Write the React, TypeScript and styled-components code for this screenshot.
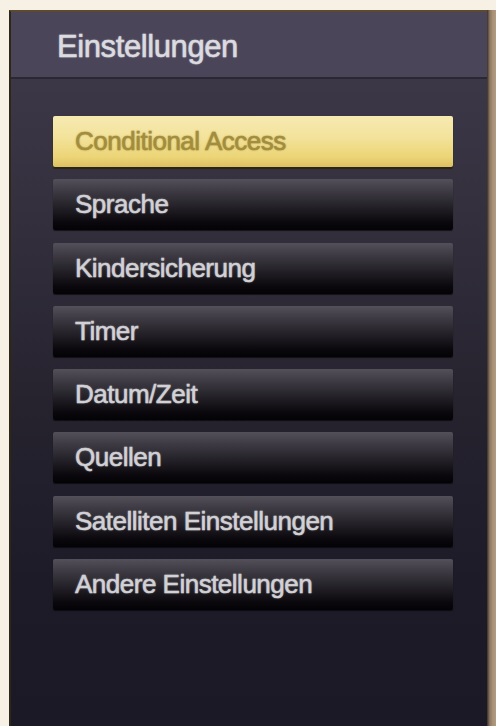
import React from 'react'
import styled, { createGlobalStyle } from 'styled-components'

const GlobalStyle = createGlobalStyle`
	html, body {
		margin: 0;
		padding: 0;
		height: 100%;
		background: #f6f1e4;
	}
	#root {
		height: 100%;
	}
`

const Frame = styled.div`
	box-sizing: border-box;
	height: 726px;
	padding: 10px 0 0 9px;
	display: flex;
	font-family: 'Liberation Sans', Arial, sans-serif;
`

const Panel = styled.div`
	flex: 1;
	display: flex;
	flex-direction: column;
	border-left: 2px solid #2e2718;
	border-top: 2px solid #5a4a30;
	background: linear-gradient(
		to bottom,
		#403b4c 0%,
		#35313f 25%,
		#26232f 55%,
		#1d1b28 80%,
		#1b1926 100%
	);
`

const Edge = styled.div`
	width: 9px;
	background: linear-gradient(
		to right,
		#3a3028 0%,
		#8a7660 30%,
		#a48e74 60%,
		#b29c82 100%
	);
`

const Header = styled.div`
	height: 67px;
	box-sizing: border-box;
	display: flex;
	align-items: center;
	padding: 5px 0 0 46px;
	background: #4a4558;
	border-bottom: 2px solid #2b2836;
`

const Title = styled.h1`
	margin: 0;
	font-size: 31px;
	font-weight: normal;
	color: #dcdbe0;
	letter-spacing: -0.4px;
	-webkit-text-stroke: 0.5px #dcdbe0;
	text-shadow: 0 0 2px rgba(230, 230, 235, 0.6);
`

const Menu = styled.ul`
	list-style: none;
	margin: 37px 34px 0 42px;
	padding: 0;
	display: flex;
	flex-direction: column;
	gap: 12.3px;
`

const Item = styled.li<{ $active?: boolean }>`
	height: 51px;
	display: flex;
	align-items: center;
	padding-left: 22px;
	border-radius: 2px;
	font-size: 26px;
	letter-spacing: -0.5px;
	color: ${(p) => (p.$active ? '#a38d3c' : '#d2d1d6')};
	-webkit-text-stroke: 0.5px ${(p) => (p.$active ? '#a38d3c' : '#d2d1d6')};
	text-shadow: ${(p) =>
		p.$active
			? '0 0 2px rgba(150, 128, 50, 0.8)'
			: '0 0 2px rgba(220, 220, 225, 0.6)'};
	background: ${(p) =>
		p.$active
			? 'linear-gradient(to bottom, #f6eab2 0%, #f3e39c 40%, #ecd577 80%, #dcc062 100%)'
			: 'linear-gradient(to bottom, #53505a 0%, #3c3942 25%, #1f1d23 60%, #0a080c 85%, #030205 100%)'};
	box-shadow: ${(p) =>
		p.$active ? '0 2px 1px #2a2418' : '0 1px 1px rgba(0, 0, 0, 0.6)'};
`

const items = [
	'Conditional Access',
	'Sprache',
	'Kindersicherung',
	'Timer',
	'Datum/Zeit',
	'Quellen',
	'Satelliten Einstellungen',
	'Andere Einstellungen',
]

export default function App() {
	return (
		<>
			<GlobalStyle />
			<Frame>
				<Panel>
					<Header>
						<Title>Einstellungen</Title>
					</Header>
					<Menu>
						{items.map((label, i) => (
							<Item key={label} $active={i === 0}>
								{label}
							</Item>
						))}
					</Menu>
				</Panel>
				<Edge />
			</Frame>
		</>
	)
}
